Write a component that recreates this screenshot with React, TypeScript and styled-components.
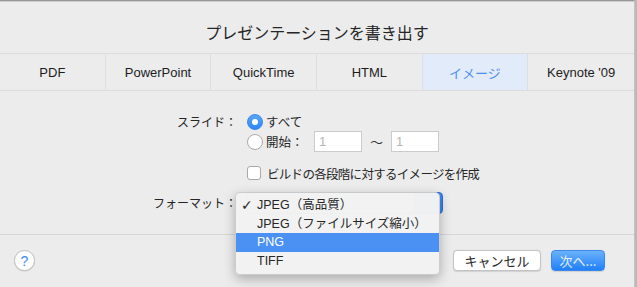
import React from "react";
import styled, { createGlobalStyle } from "styled-components";

const Global = createGlobalStyle`
  html, body { margin: 0; padding: 0; }
  body {
    background: #b8b8b8;
    font-family: "Liberation Sans", "Noto Sans CJK JP", sans-serif;
    color: #222;
    -webkit-font-smoothing: antialiased;
  }
`;

const Window = styled.div`
  width: 634px;
  height: 286px;
  background: #ececec;
  border-top: 1px solid #979797;
  border-right: 1px solid #c4c4c4;
  box-shadow: inset 0 1px #cdcdcd;
  display: flex;
  flex-direction: column;
`;

const Title = styled.div`
  padding: 21px 0 11px;
  height: 20px;
  line-height: 20px;
  text-align: center;
  font-size: 16px;
  color: #262626;
  font-family: "Noto Sans CJK JP", sans-serif;
`;

const TabBar = styled.div`
  display: grid;
  grid-template-columns: repeat(6, 1fr);
  border-top: 1px solid #dcdcdc;
  border-bottom: 1px solid #dcdcdc;
  height: 36px;
`;

const Tab = styled.div<{ $active?: boolean }>`
  display: flex;
  align-items: center;
  justify-content: center;
  font-size: 13px;
  color: ${(p) => (p.$active ? "#4d8ff0" : "#1c1c1c")};
  background: ${(p) => (p.$active ? "#e2ebfa" : "transparent")};
  border-right: 1px solid #dedede;
  &:last-child { border-right: none; }
`;

const Form = styled.div`
  display: flex;
  flex-direction: column;
  padding-top: 21px;
  height: 122px;
  border-bottom: 1px solid #d6d6d6;
`;

const FormRow = styled.div<{ $mt?: number }>`
  display: grid;
  grid-template-columns: 237px 1fr;
  column-gap: 10px;
  margin-top: ${(p) => p.$mt ?? 0}px;
`;

const Label = styled.div<{ $h: number }>`
  text-align: right;
  font-size: 12px;
  height: ${(p) => p.$h}px;
  line-height: ${(p) => p.$h}px;
  color: #262626;
  font-family: "Noto Sans CJK JP", sans-serif;
`;

const Controls = styled.div`
  display: flex;
  flex-direction: column;
`;

const OptionLine = styled.div<{ $h: number }>`
  display: flex;
  align-items: center;
  height: ${(p) => p.$h}px;
  font-size: 12.5px;
  color: #262626;
  font-family: "Noto Sans CJK JP", sans-serif;
`;

const Radio = styled.span<{ $on?: boolean }>`
  width: 16px;
  height: 16px;
  border-radius: 50%;
  box-sizing: border-box;
  margin-right: 3px;
  display: inline-flex;
  align-items: center;
  justify-content: center;
  background: ${(p) => (p.$on ? "linear-gradient(#5aa6fb, #2f86f6)" : "#fff")};
  border: 1px solid ${(p) => (p.$on ? "#3a86ea" : "#ababab")};
  &::after {
    content: "";
    width: 6px;
    height: 6px;
    border-radius: 50%;
    background: #fff;
    display: ${(p) => (p.$on ? "block" : "none")};
  }
`;

const NumBox = styled.div`
  width: 48px;
  height: 21px;
  box-sizing: border-box;
  background: #fff;
  border: 1px solid #cbcbcb;
  color: #b5b5b5;
  font-size: 13px;
  line-height: 19px;
  padding-left: 4px;
  font-family: "Liberation Sans", sans-serif;
`;

const Tilde = styled.span`
  width: 29px;
  text-align: center;
  font-size: 13px;
  color: #333;
`;

const StartText = styled.span`
  width: 48px;
`;

const Check = styled.span`
  width: 14px;
  height: 14px;
  box-sizing: border-box;
  border: 1px solid #a9a9a9;
  border-radius: 3px;
  background: #fff;
  margin-right: 6px;
`;

const CheckText = styled.span`
  letter-spacing: -0.7px;
`;

const PopupWrap = styled.div`
  position: relative;
  width: 196px;
  height: 22px;
`;

const PopupButton = styled.div`
  width: 196px;
  height: 22px;
  box-sizing: border-box;
  border-radius: 4px;
  background: linear-gradient(90deg, #fff 0 85%, #3b8af5 85% 100%);
  border: 1px solid #2f6fd0;
`;

const Menu = styled.div`
  position: absolute;
  left: -12px;
  top: 0;
  width: 205px;
  box-sizing: border-box;
  padding: 3px 0 4px;
  background: rgba(242, 242, 242, 0.98);
  border: 1px solid rgba(0, 0, 0, 0.16);
  border-radius: 5px;
  box-shadow: 0 4px 12px rgba(0, 0, 0, 0.28);
  z-index: 5;
`;

const MenuItem = styled.div<{ $hl?: boolean }>`
  position: relative;
  height: 18.5px;
  line-height: 18.5px;
  padding-left: 21px;
  font-size: 12.5px;
  color: ${(p) => (p.$hl ? "#fff" : "#262626")};
  background: ${(p) => (p.$hl ? "#4a91f3" : "transparent")};
  white-space: nowrap;
`;

const CheckMark = styled.span`
  position: absolute;
  left: 5px;
  top: 0;
  font-family: "DejaVu Sans", sans-serif;
  font-size: 14px;
  font-weight: bold;
  color: #2a2a2a;
`;

const Footer = styled.div`
  display: flex;
  align-items: center;
  padding: 15px 29px 0 14px;
  gap: 10px;
`;

const HelpButton = styled.div`
  width: 21px;
  height: 21px;
  box-sizing: border-box;
  border-radius: 50%;
  background: #fff;
  border: 1px solid #c2c2c2;
  box-shadow: 0 0.5px 1px rgba(0, 0, 0, 0.15);
  color: #3d8cf3;
  font-size: 14px;
  display: flex;
  align-items: center;
  justify-content: center;
  margin-right: auto;
`;

const Button = styled.div<{ $primary?: boolean; $w: number }>`
  width: ${(p) => p.$w}px;
  height: 21px;
  box-sizing: border-box;
  border-radius: 4px;
  display: flex;
  align-items: center;
  justify-content: center;
  font-size: 13px;
  font-family: "Noto Sans CJK JP", sans-serif;
  color: ${(p) => (p.$primary ? "#e6f0ff" : "#262626")};
  background: ${(p) => (p.$primary ? "linear-gradient(#6ab1fb, #2180f8)" : "#fff")};
  border: 1px solid ${(p) => (p.$primary ? "#3b87ee" : "#c3c3c3")};
  box-shadow: 0 0.5px 1px rgba(0, 0, 0, 0.12);
`;

const tabs = ["PDF", "PowerPoint", "QuickTime", "HTML", "イメージ", "Keynote '09"];
const formats = ["JPEG（高品質）", "JPEG（ファイルサイズ縮小）", "PNG", "TIFF"];

export default function App() {
  return (
    <>
      <Global />
      <Window>
        <Title>プレゼンテーションを書き出す</Title>
        <TabBar>
          {tabs.map((t) => (
            <Tab key={t} $active={t === "イメージ"}>
              {t}
            </Tab>
          ))}
        </TabBar>
        <Form>
          <FormRow>
            <Label $h={19}>スライド：</Label>
            <Controls>
              <OptionLine $h={19}>
                <Radio $on />
                すべて
              </OptionLine>
              <OptionLine $h={21}>
                <Radio />
                <StartText>開始：</StartText>
                <NumBox>1</NumBox>
                <Tilde>〜</Tilde>
                <NumBox>1</NumBox>
              </OptionLine>
            </Controls>
          </FormRow>
          <FormRow $mt={13}>
            <span />
            <OptionLine $h={16}>
              <Check />
              <CheckText>ビルドの各段階に対するイメージを作成</CheckText>
            </OptionLine>
          </FormRow>
          <FormRow $mt={11}>
            <Label $h={22}>フォーマット：</Label>
            <PopupWrap>
              <PopupButton />
              <Menu>
                {formats.map((f, i) => (
                  <MenuItem key={f} $hl={f === "PNG"}>
                    {i === 0 && <CheckMark>✓</CheckMark>}
                    {f}
                  </MenuItem>
                ))}
              </Menu>
            </PopupWrap>
          </FormRow>
        </Form>
        <Footer>
          <HelpButton>?</HelpButton>
          <Button $w={88}>キャンセル</Button>
          <Button $w={54} $primary>
            次へ...
          </Button>
        </Footer>
      </Window>
    </>
  );
}
